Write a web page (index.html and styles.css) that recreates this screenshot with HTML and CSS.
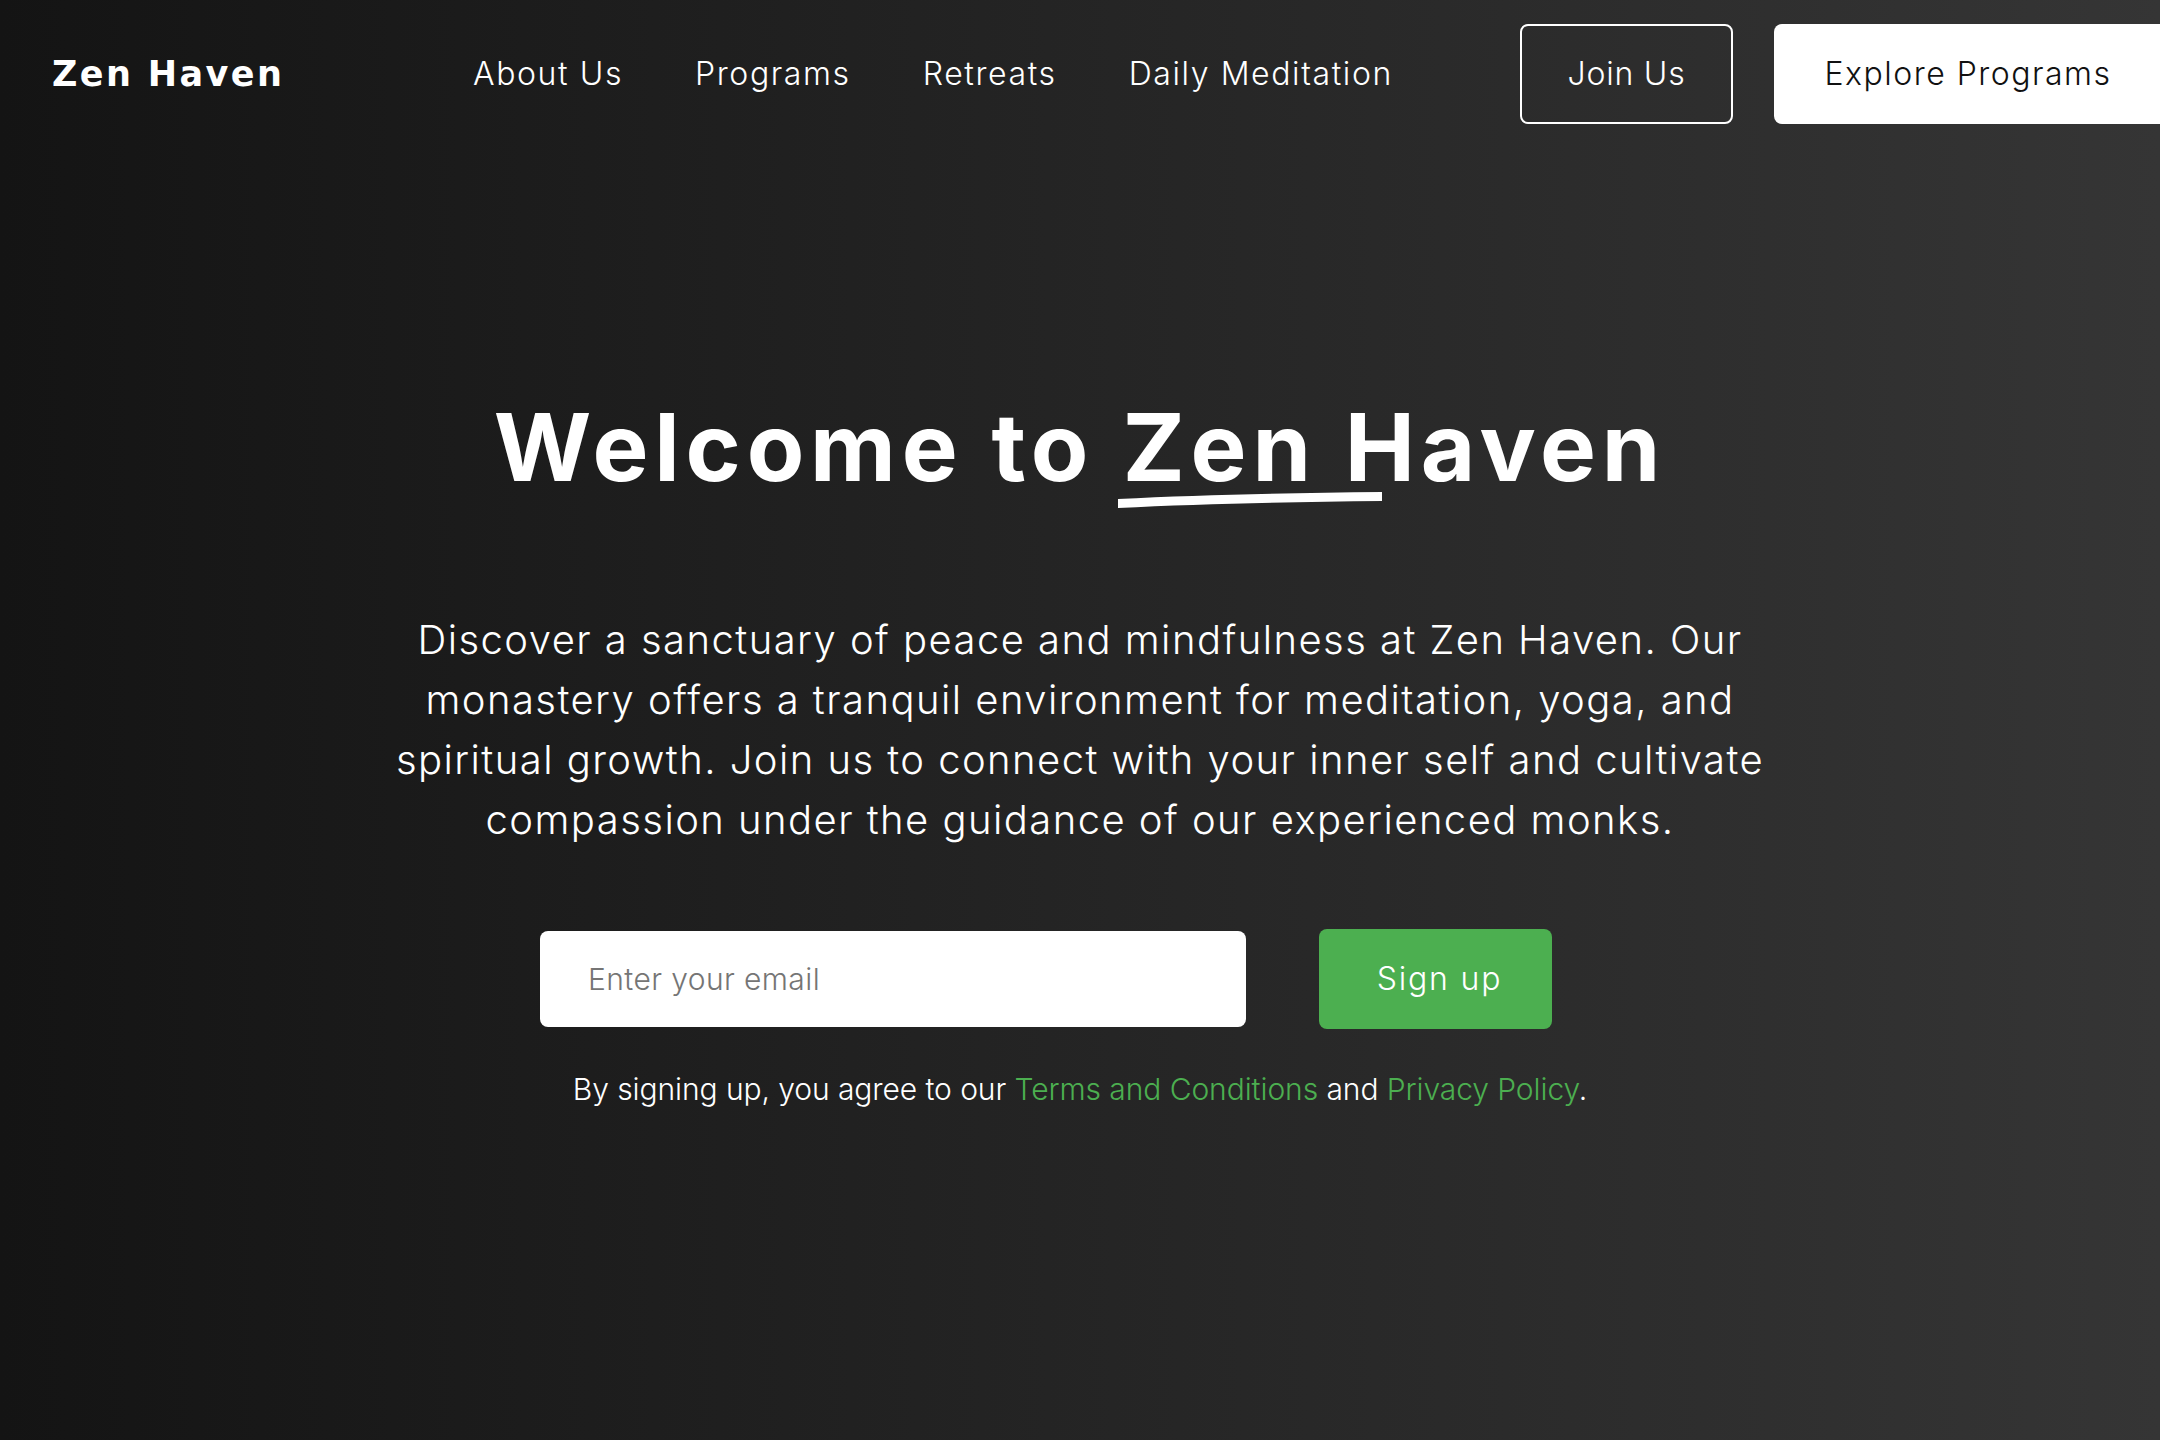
FILE: index.html
```html
<!DOCTYPE html>
<html lang="en">
   <head>
      <meta charset="UTF-8">
      <meta name="viewport" content="width=device-width, initial-scale=1.0">
      <title>Zen Haven</title>
      <link rel="stylesheet" href="styles.css">
   </head>

   <body>
      <header class="topbar">
         <a class="logo" href="#">Zen Haven</a>
         <nav class="nav-links">
            <a href="#">About Us</a>
            <a href="#">Programs</a>
            <a href="#">Retreats</a>
            <a href="#">Daily Meditation</a>
         </nav>
         <div class="nav-actions">
            <button type="button" class="btn-outline">Join Us</button>
            <button type="button" class="btn-white">Explore Programs</button>
         </div>
      </header>

      <main class="hero">
         <h1 class="hero-title">Welcome to <span class="marked">Zen Haven<svg class="scribble" viewBox="0 0 264 16" aria-hidden="true"><path d="M0 7 C80 3 170 1 264 0 V9 C170 10 80 12 0 16 Z"/></svg></span></h1>
         <p class="hero-text">Discover a sanctuary of peace and mindfulness at Zen Haven. Our<br>monastery offers a tranquil environment for meditation, yoga, and<br>spiritual growth. Join us to connect with your inner self and cultivate<br>compassion under the guidance of our experienced monks.</p>
         <form class="signup">
            <input type="email" class="signup-input" placeholder="Enter your email">
            <button type="button" class="btn-green">Sign up</button>
         </form>
         <p class="legal">By signing up, you agree to our <a href="#">Terms and Conditions</a> and <a href="#">Privacy Policy</a>.</p>
      </main>
   </body>
</html>
```

FILE: styles.css
```css
*{
   box-sizing: border-box;
   margin: 0;
   padding: 0;
}

html, body{
   height: 100%;
}

body{
   background: linear-gradient(to right, #141414, #353535);
   color: #fff;
   font-family: "Inter", "Noto Sans", sans-serif;
   overflow: hidden;
}

a{
   color: inherit;
   text-decoration: none;
}

.topbar{
   display: flex;
   align-items: center;
   padding: 24px 0 0 52px;
}

.logo{
   width: 231px;
   font-family: "DejaVu Sans", sans-serif;
   font-size: 35px;
   font-weight: 700;
   letter-spacing: 2.4px;
   white-space: nowrap;
}

.nav-links{
   display: flex;
   gap: 72px;
   margin-left: 190px;
   padding-bottom: 2px;
   font-size: 32px;
   font-weight: 300;
   letter-spacing: 1.6px;
}

.nav-actions{
   display: flex;
   gap: 41px;
   margin-left: auto;
}

button{
   height: 100px;
   padding-bottom: 2px;
   border-radius: 8px;
   font-family: inherit;
   font-size: 32px;
   font-weight: 300;
   letter-spacing: 1.5px;
}

.btn-outline{
   width: 213px;
   background: transparent;
   border: 2px solid #fff;
   color: #fff;
   letter-spacing: 0.8px;
}

.btn-white{
   width: 386px;
   padding-left: 2px;
   background: #fff;
   border: none;
   border-radius: 8px 0 0 8px;
   color: #111;
}

.hero{
   display: flex;
   flex-direction: column;
   align-items: center;
   padding-top: 265px;
   text-align: center;
}

.hero-title{
   font-size: 94px;
   font-weight: 700;
   letter-spacing: 5.8px;
   line-height: 116px;
}

.marked{
   position: relative;
}

.scribble{
   position: absolute;
   left: -4px;
   bottom: -4px;
   width: 264px;
   height: 16px;
   fill: #fff;
}

.hero-text{
   margin-top: 105px;
   font-size: 40px;
   font-weight: 350;
   letter-spacing: 1.45px;
   line-height: 60px;
}

.signup{
   display: flex;
   align-items: center;
   gap: 73px;
   margin-top: 79px;
   padding-right: 68px;
}

.signup-input{
   width: 706px;
   height: 96px;
   padding: 0 48px;
   border: none;
   border-radius: 8px;
   background: #fff;
   font-family: inherit;
   font-size: 30px;
   font-weight: 300;
   letter-spacing: 0.4px;
}

.signup-input::placeholder{
   color: #757575;
}

.btn-green{
   width: 233px;
   padding-left: 8px;
   background: #4caf50;
   border: none;
   color: #fff;
   letter-spacing: 1.8px;
}

.legal{
   margin-top: 42px;
   font-size: 30px;
   font-weight: 300;
   letter-spacing: -0.08px;
}

.legal a{
   color: #4caf50;
}
```
